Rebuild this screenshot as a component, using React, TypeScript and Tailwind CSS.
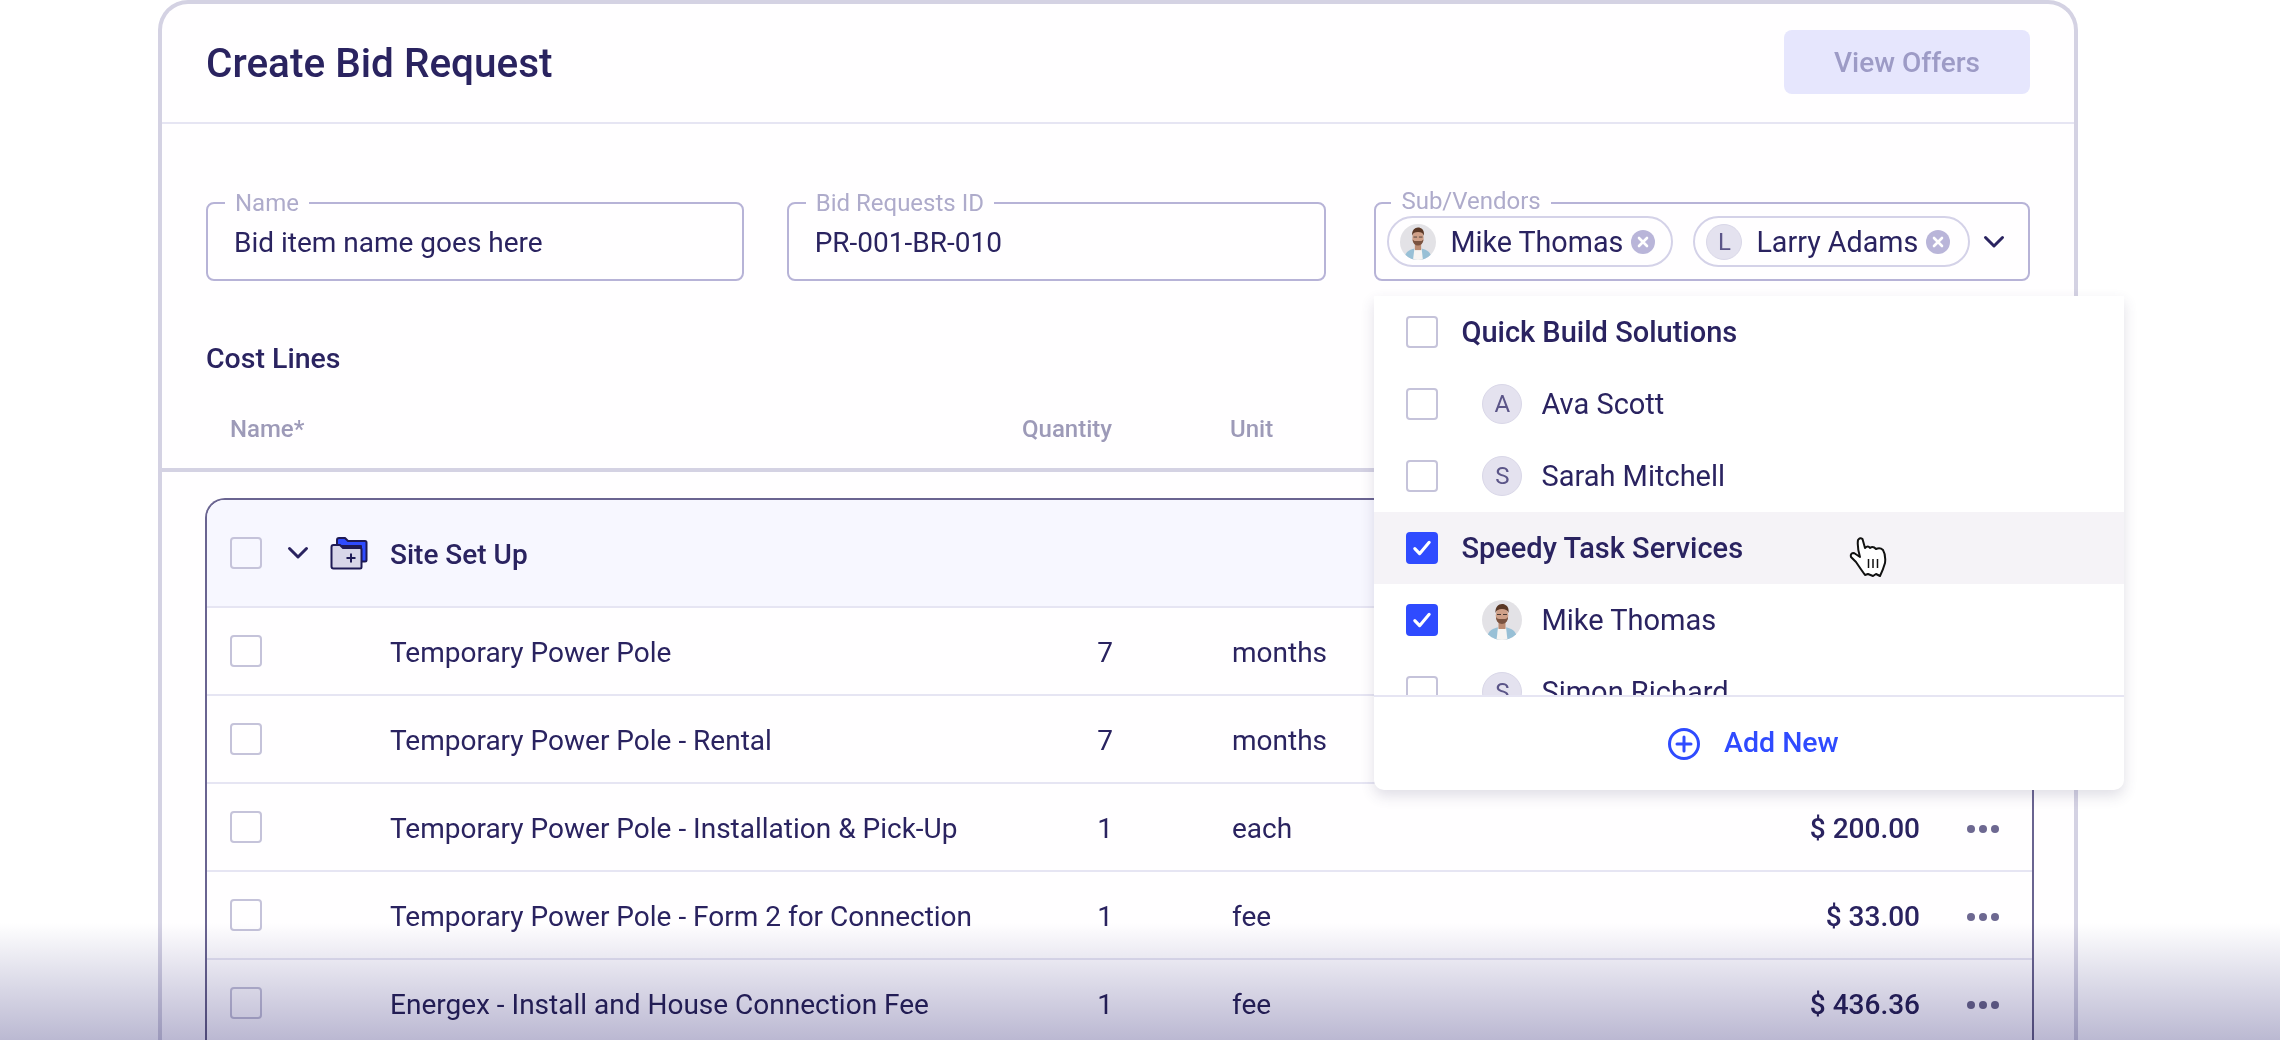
import { useId } from "react";

const rows = [
  { name: "Temporary Power Pole", qty: "7", unit: "months" },
  { name: "Temporary Power Pole - Rental", qty: "7", unit: "months" },
  { name: "Temporary Power Pole - Installation & Pick-Up", qty: "1", unit: "each", amount: "$ 200.00" },
  { name: "Temporary Power Pole - Form 2 for Connection", qty: "1", unit: "fee", amount: "$ 33.00" },
  { name: "Energex - Install and House Connection Fee", qty: "1", unit: "fee", amount: "$ 436.36" },
];

function Checkbox({ checked = false }: { checked?: boolean }) {
  if (checked) {
    return (
      <span className="flex h-[32px] w-[32px] shrink-0 items-center justify-center rounded-[4px] bg-[#2f4bff]">
        <svg width="24" height="24" viewBox="0 0 20 20" fill="none">
          <path d="M4 10.500l4 4.200 8-9.400" stroke="#fff" strokeWidth="2.600" strokeLinecap="round" strokeLinejoin="round" />
        </svg>
      </span>
    );
  }
  return <span className="block h-[32px] w-[32px] shrink-0 rounded-[4px] border-2 border-[#c5c3da]" />;
}

function Chevron() {
  return (
    <svg width="22" height="14" viewBox="0 0 22 14" fill="none">
      <path d="M2.500 2.500L11 11l8.500-8.500" stroke="#2a2360" strokeWidth="3" strokeLinecap="round" strokeLinejoin="round" />
    </svg>
  );
}

function Photo({ size }: { size: number }) {
  const id = useId();
  return (
    <svg width={size} height={size} viewBox="0 0 40 40" className="shrink-0">
      <clipPath id={id}>
        <circle cx="20" cy="20" r="20" />
      </clipPath>
      <g clipPath={`url(#${id})`}>
        <rect width="40" height="40" fill="#e3e2e6" />
        <path d="M5 40c0-8 4-11 10-12.500h10c6 1.500 10 4.500 10 12.500z" fill="#98c0d6" />
        <path d="M14.500 40l1.500-12.500h8L25.500 40z" fill="#f6f4f2" />
        <rect x="16.500" y="22" width="7" height="7" fill="#bb8b72" />
        <ellipse cx="20" cy="15.500" rx="6.300" ry="8.500" fill="#cfa088" />
        <path d="M13.500 13c-.5-6 3-9 6.500-9s7.500 2.500 6.500 9c-1-3-3-4-6.500-4s-5.500 1-6.500 4z" fill="#5b3826" />
        <path d="M14 17c1 1 1.500 2 3 2h6c1.500 0 2-1 3-2 0 4-2.500 7-6 7s-6-3-6-7z" fill="#7a5340" />
        <path d="M15 14.500h4M21 14.500h4" stroke="#4a3a34" strokeWidth="1" />
      </g>
    </svg>
  );
}

function Initial({ letter, size }: { letter: string; size: number }) {
  return (
    <span
      className="flex shrink-0 items-center justify-center rounded-full border border-[#d9d7e8] bg-[#e4e2ef] text-[24px] text-[#5b5588]"
      style={{ width: size, height: size }}
    >
      {letter}
    </span>
  );
}

function FieldLabel({ children }: { children: string }) {
  return <span className="absolute left-[17px] top-[-16px] bg-[#fffeff] px-[10px] text-[24px] leading-[30px] text-[#aeabcb]">{children}</span>;
}

function Field({ label, value, className }: { label: string; value: string; className: string }) {
  return (
    <div className={`relative flex h-[79px] items-center rounded-[8px] border-2 border-[#b7b3d7] pl-[26px] pt-[3px] text-[28px] ${className}`}>
      <FieldLabel>{label}</FieldLabel>
      {value}
    </div>
  );
}

function Chip({ name, children, className }: { name: string; children: React.ReactNode; className: string }) {
  return (
    <div className={`flex h-[51px] items-center rounded-full border-2 border-[#d4d2e8] pl-[11px] text-[28.700px] ${className}`}>
      {children}
      <span className="ml-[14px] mt-[2px]">{name}</span>
      <svg width="24" height="24" viewBox="0 0 24 24" className="ml-[8px] shrink-0">
        <circle cx="12" cy="12" r="12" fill="#b9b5d9" />
        <path d="M8 8l8 8M16 8l-8 8" stroke="#fff" strokeWidth="2.600" strokeLinecap="round" />
      </svg>
    </div>
  );
}

function VendorRow({ name, checked, group, children, hover }: { name: string; checked?: boolean; group?: boolean; children?: React.ReactNode; hover?: boolean }) {
  return (
    <div className={`relative flex h-[72px] shrink-0 items-center pl-[32px] text-[29px] ${hover ? "bg-[#f5f3f7]" : ""}`}>
      <Checkbox checked={checked} />
      {group ? (
        <span className="ml-[23px] mt-[2px] font-medium">{name}</span>
      ) : (
        <>
          <span className="ml-[44px]">{children}</span>
          <span className="ml-[19px] mt-[2px]">{name}</span>
        </>
      )}
      {hover && (
        <svg width="38" height="42" viewBox="-1 -1 38 42" fill="none" className="absolute left-[475px] top-[24px]">
          <path
            d="M8 3Q10 0 12.500 2L15 11Q18 8 20 11Q23 8.500 26 12Q30 10 33 13Q36 18 35 26Q33 33 30 39L26 37L23 39L18 37L15 38Q10 31 6 25L1 20Q0 16 4 16L10 20Q7 10 8 3Z"
            fill="#fff"
            stroke="#111"
            strokeWidth="2"
            strokeLinejoin="round"
          />
          <path d="M18.500 22v9M23 22v9M27.500 22v9" stroke="#111" strokeWidth="1.500" />
        </svg>
      )}
    </div>
  );
}

export default function App() {
  return (
    <div className="relative h-[1040px] w-[2280px] overflow-hidden bg-white font-[Roboto,sans-serif] text-[#2a2360]">
      <div className="ml-[158px] h-[1040px] w-[1920px] rounded-t-[30px] border-[4px] border-b-0 border-[#d4d2e3] bg-[#fffeff]">
        <div className="flex h-[120px] items-start justify-between border-b-2 border-[#e6e5f3] pl-[44px] pr-[44px] pt-[26px]">
          <h1 className="mt-[11px] text-[40.500px] font-medium leading-[44px]">Create Bid Request</h1>
          <button className="h-[64px] w-[246px] rounded-[8px] bg-[#e6e6fd] pt-[2px] text-[28px] font-medium text-[#9d9bc6]">View Offers</button>
        </div>

        <div className="flex px-[44px] pt-[78px]">
          <Field label="Name" value="Bid item name goes here" className="w-[538px]" />
          <Field label="Bid Requests ID" value="PR-001-BR-010" className="ml-[43px] w-[540px]" />
          <div className="relative ml-[48px] h-[79px] w-[656px]">
            <div className="flex h-full items-center rounded-[8px] border-2 border-[#b7b3d7] pl-[11px]">
              <FieldLabel>Sub/Vendors</FieldLabel>
              <Chip name="Mike Thomas" className="w-[286px]">
                <Photo size={36} />
              </Chip>
              <Chip name="Larry Adams" className="ml-[20px] w-[277px]">
                <Initial letter="L" size={36} />
              </Chip>
              <span className="ml-[13px]">
                <Chevron />
              </span>
            </div>

            <div className="absolute left-0 top-[94px] z-10 w-[750px] rounded-b-[10px] bg-white shadow-[0_6px_14px_rgba(60,55,100,0.16)]">
              <div className="flex h-[399px] flex-col overflow-hidden">
                <VendorRow name="Quick Build Solutions" group />
                <VendorRow name="Ava Scott">
                  <Initial letter="A" size={40} />
                </VendorRow>
                <VendorRow name="Sarah Mitchell">
                  <Initial letter="S" size={40} />
                </VendorRow>
                <VendorRow name="Speedy Task Services" group checked hover />
                <VendorRow name="Mike Thomas" checked>
                  <Photo size={40} />
                </VendorRow>
                <VendorRow name="Simon Richard">
                  <Initial letter="S" size={40} />
                </VendorRow>
              </div>
              <div className="flex h-[95px] items-center justify-center border-t-2 border-[#e6e5f3] pl-[8px] text-[28.500px] font-medium text-[#2f4bff]">
                <svg width="32" height="32" viewBox="0 0 32 32" fill="none" className="mr-[24px]">
                  <circle cx="16" cy="16" r="14.500" stroke="#2f4bff" strokeWidth="3" />
                  <path d="M16 9v14M9 16h14" stroke="#2f4bff" strokeWidth="3" strokeLinecap="round" />
                </svg>
                Add New
              </div>
            </div>
          </div>
        </div>

        <div className="px-[44px] pt-[62px] text-[28.500px] font-medium leading-[32px]">Cost Lines</div>

        <div className="flex h-[97px] items-center border-b-4 border-[#d4d2e3] pt-[14px] text-[24px] font-medium text-[#9d9ab8]">
          <span className="ml-[68px] w-[792px]">Name*</span>
          <span className="w-[208px]">Quantity</span>
          <span>Unit</span>
        </div>

        <div className="ml-[43px] mt-[26px] w-[1829px] overflow-hidden rounded-t-[20px] border-2 border-b-0 border-[#6a6491]">
          <div className="flex h-[108px] items-center border-b-2 border-[#e6e5f3] bg-[#f7f7ff] pl-[23px]">
            <Checkbox />
            <span className="ml-[25px]">
              <Chevron />
            </span>
            <svg width="38" height="33" viewBox="0 0 38 33" fill="none" className="ml-[21px]">
              <path d="M7 9V3q0-2 2-2h6l3 3h17q1.500 0 1.500 1.500V23q0 1.500-1.500 1.500h-4V9z" fill="#2f4bff" stroke="#1f1a55" strokeWidth="2" strokeLinejoin="round" />
              <path d="M1.500 10q0-2 2-2H10l3 3h17q1.500 0 1.500 1.500V30q0 1.500-1.500 1.500H3.500q-2 0-2-2z" fill="#d8d6e8" stroke="#1f1a55" strokeWidth="2" strokeLinejoin="round" />
              <path d="M21 16.500v9M16.500 21h9" stroke="#1f1a55" strokeWidth="2" />
            </svg>
            <span className="ml-[22px] mt-[3px] text-[28px] font-medium">Site Set Up</span>
          </div>

          {rows.map((row) => (
            <div
              key={row.name}
              className="grid h-[88px] grid-cols-[160px_675px_80px_574px_201px_1fr] items-center border-b-2 border-[#e6e5f3] pl-[23px] text-[28px] [&>span:not(:first-child)]:mt-[3px]"
            >
              <Checkbox />
              <span>{row.name}</span>
              <span className="text-center">{row.qty}</span>
              <span className="pl-[87px]">{row.unit}</span>
              <span className="text-right font-medium">{row.amount}</span>
              <span className="ml-[47px] flex gap-[4px]">
                <i className="h-[8px] w-[8px] rounded-full bg-[#6d6891]" />
                <i className="h-[8px] w-[8px] rounded-full bg-[#6d6891]" />
                <i className="h-[8px] w-[8px] rounded-full bg-[#6d6891]" />
              </span>
            </div>
          ))}
        </div>
      </div>

      <div className="pointer-events-none absolute inset-x-0 bottom-0 z-20 h-[117px] bg-gradient-to-b from-white to-[#bbb9d2] mix-blend-multiply" />
    </div>
  );
}
